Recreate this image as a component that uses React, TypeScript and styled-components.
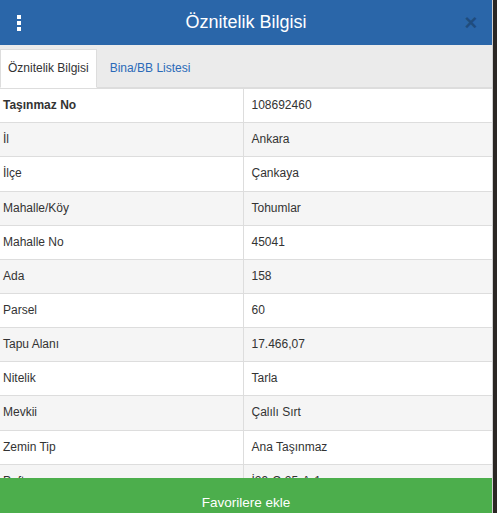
import React, { FC, useState } from 'react';
import { styled, createGlobalStyle } from 'styled-components';

const GlobalStyle = createGlobalStyle`
  html, body {
    margin: 0;
    padding: 0;
    height: 100%;
    overflow: hidden;
    background: #2b2724;
  }
  body {
    font-family: 'Liberation Sans', Arial, Helvetica, sans-serif;
    color: #333;
  }
`;

const ROWS: [string, string][] = [
  ['Taşınmaz No', '108692460'],
  ['İl', 'Ankara'],
  ['İlçe', 'Çankaya'],
  ['Mahalle/Köy', 'Tohumlar'],
  ['Mahalle No', '45041'],
  ['Ada', '158'],
  ['Parsel', '60'],
  ['Tapu Alanı', '17.466,07'],
  ['Nitelik', 'Tarla'],
  ['Mevkii', 'Çalılı Sırt'],
  ['Zemin Tip', 'Ana Taşınmaz'],
  ['Pafta', 'İ29-C-25-A-1'],
];

const Panel = styled.div`
  width: 492px;
  height: 526px;
  background: #fff;
  display: flex;
  flex-direction: column;
  overflow: hidden;
  border-right: 1px solid #cfcfcf;
`;

const Header = styled.div`
  height: 45px;
  flex: none;
  background: #2a66a9;
  display: flex;
  align-items: center;
  padding: 0 14px 0 16px;
`;

const MenuButton = styled.div`
  width: 6px;
  display: flex;
  flex-direction: column;
  align-items: center;
  gap: 2px;
  padding-top: 1px;

  span {
    width: 4px;
    height: 4px;
    background: #fff;
  }
`;

const Title = styled.h1`
  flex: 1;
  margin: 0;
  text-align: center;
  color: #fff;
  font-size: 18px;
  font-weight: normal;
  padding-left: 6px;
`;

const Close = styled.button`
  border: 0;
  background: none;
  padding: 0;
  width: 14px;
  font-family: 'Liberation Sans', Arial, sans-serif;
  font-size: 22px;
  font-weight: bold;
  line-height: 1;
  color: #000;
  opacity: 0.25;
  cursor: pointer;
`;

const TabBar = styled.div`
  flex: none;
  background: #ebebeb;
  padding-top: 4px;
  border-bottom: 1px solid #ddd;
  display: flex;
`;

const Tab = styled.div<{ $active?: boolean }>`
  padding: 10px 7px;
  margin-right: 5px;
  margin-bottom: -1px;
  font-size: 12px;
  line-height: 1.42857;
  border: 1px solid ${(p) => (p.$active ? '#ddd' : 'transparent')};
  border-bottom-color: ${(p) => (p.$active ? '#fff' : 'transparent')};
  background: ${(p) => (p.$active ? '#fff' : 'transparent')};
  color: ${(p) => (p.$active ? '#333' : '#2a6ab8')};
  cursor: pointer;
`;

const Body = styled.div`
  flex: 1;
  overflow: hidden;
`;

const Table = styled.table`
  width: 100%;
  border-collapse: collapse;
  font-size: 12px;
  line-height: 1.42857;
`;

const Row = styled.tr<{ $striped: boolean }>`
  background: ${(p) => (p.$striped ? '#f5f5f5' : '#fff')};
`;

const Cell = styled.td<{ $label?: boolean; $bold?: boolean }>`
  border-top: 1px solid #ddd;
  padding: 8px 8px 8px ${(p) => (p.$label ? '3px' : '8px')};
  width: ${(p) => (p.$label ? '243px' : 'auto')};
  box-sizing: border-box;
  border-left: ${(p) => (p.$label ? 'none' : '1px solid #ddd')};
  font-weight: ${(p) => (p.$bold ? 'bold' : 'normal')};
  white-space: nowrap;
`;

const FavButton = styled.button`
  flex: none;
  height: 48px;
  border: 0;
  background: #4cae4c;
  color: #fff;
  font-family: 'Liberation Sans', Arial, sans-serif;
  font-size: 13.5px;
  cursor: pointer;
`;

const App: FC = () => {
  const [tab, setTab] = useState(0);
  return (
    <>
      <GlobalStyle />
      <Panel>
        <Header>
          <MenuButton>
            <span />
            <span />
            <span />
          </MenuButton>
          <Title>Öznitelik Bilgisi</Title>
          <Close>×</Close>
        </Header>
        <TabBar>
          <Tab $active={tab === 0} onClick={() => setTab(0)}>
            Öznitelik Bilgisi
          </Tab>
          <Tab $active={tab === 1} onClick={() => setTab(1)}>
            Bina/BB Listesi
          </Tab>
        </TabBar>
        <Body>
          <Table>
            <tbody>
              {ROWS.map(([label, value], i) => (
                <Row key={label} $striped={i % 2 === 1}>
                  <Cell $label $bold={i === 0}>
                    {label}
                  </Cell>
                  <Cell>{value}</Cell>
                </Row>
              ))}
            </tbody>
          </Table>
        </Body>
        <FavButton>Favorilere ekle</FavButton>
      </Panel>
    </>
  );
};

export default App;
